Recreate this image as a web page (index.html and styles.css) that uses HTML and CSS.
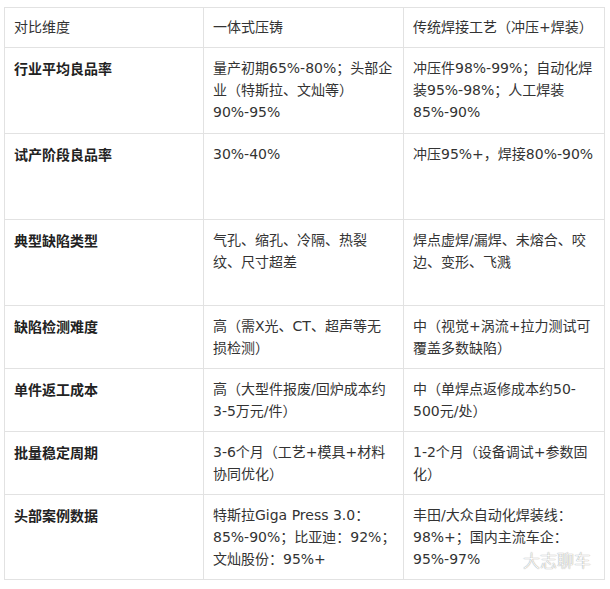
FILE: index.html
```html
<!DOCTYPE html>
<html lang="zh-CN">
<head>
<meta charset="utf-8">
<title>一体式压铸 vs 传统焊接工艺</title>
<link rel="stylesheet" href="styles.css">
</head>
<body>
<div class="wrap">
<table class="cmp">
  <colgroup><col class="c1"><col class="c2"><col class="c3"></colgroup>
  <thead>
    <tr class="head"><th>对比维度</th><th>一体式压铸</th><th>传统焊接工艺（冲压+焊装）</th></tr>
  </thead>
  <tbody>
    <tr class="tall"><th>行业平均良品率</th><td>量产初期65%-80%；头部企<br>业（特斯拉、文灿等）<br>90%-95%</td><td>冲压件98%-99%；自动化焊<br>装95%-98%；人工焊装<br>85%-90%</td></tr>
    <tr class="tall"><th>试产阶段良品率</th><td>30%-40%</td><td>冲压95%+，焊接80%-90%</td></tr>
    <tr class="tall"><th>典型缺陷类型</th><td>气孔、缩孔、冷隔、热裂<br>纹、尺寸超差</td><td>焊点虚焊/漏焊、未熔合、咬<br>边、变形、飞溅</td></tr>
    <tr><th>缺陷检测难度</th><td>高（需X光、CT、超声等无<br>损检测）</td><td>中（视觉+涡流+拉力测试可<br>覆盖多数缺陷）</td></tr>
    <tr><th>单件返工成本</th><td>高（大型件报废/回炉成本约<br>3-5万元/件）</td><td>中（单焊点返修成本约50-<br>500元/处）</td></tr>
    <tr><th>批量稳定周期</th><td>3-6个月（工艺+模具+材料<br>协同优化）</td><td>1-2个月（设备调试+参数固<br>化）</td></tr>
    <tr><th>头部案例数据</th><td>特斯拉Giga Press 3.0：<br>85%-90%；比亚迪：92%；<br>文灿股份：95%+</td><td>丰田/大众自动化焊装线：<br>98%+；国内主流车企：<br>95%-97%</td></tr>
  </tbody>
</table>
<div class="mark">大志聊车</div>
</div>
</body>
</html>
```
FILE: styles.css
```css
html, body {
  margin: 0;
  padding: 0;
  background: #fff;
}
.wrap {
  position: relative;
  padding: 7px 0 0 4px;
  width: 600px;
}
.cmp {
  border-collapse: collapse;
  table-layout: fixed;
  width: 600px;
  font-family: "DejaVu Sans", "Noto Sans CJK SC", sans-serif;
  font-size: 14px;
  line-height: 22px;
  color: #333;
}
.c1 { width: 199px; }
.c2 { width: 200px; }
.c3 { width: 201px; }
.cmp th, .cmp td {
  border: 1px solid #e2e2e2;
  padding: 9px 4px 9px 9px;
  text-align: left;
  vertical-align: top;
  white-space: nowrap;
}
.cmp tbody th {
  font-family: "Noto Sans CJK SC", sans-serif;
  font-weight: bold;
  color: #222;
}
.cmp .head th {
  font-weight: normal;
  padding: 8px 4px 9px 9px;
  color: #333;
}
.cmp tr.tall { height: 86px; }
.mark {
  position: absolute;
  right: 13px;
  bottom: 10px;
  font-family: "Noto Sans CJK SC", sans-serif;
  font-weight: 300;
  font-size: 17px;
  line-height: 20px;
  color: #fff;
  text-shadow: 0 0 1px #999, 0 0 1px #aaa;
}
```
